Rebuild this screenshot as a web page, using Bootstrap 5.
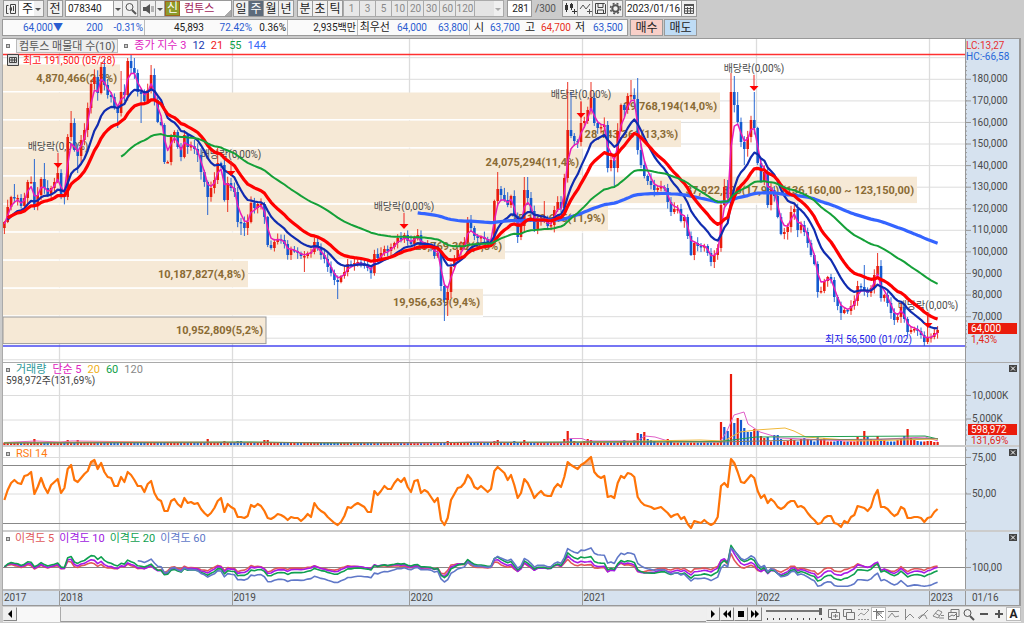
<!DOCTYPE html>
<html lang="ko">
<head>
<meta charset="utf-8">
<meta name="viewport" content="width=device-width, initial-scale=1">
<title>컴투스 주간 차트</title>
<link href="https://cdn.jsdelivr.net/npm/bootstrap@5.3.0/dist/css/bootstrap.min.css" rel="stylesheet">
<style>
:root{--edge:#9a9a9a;--face:#f0f0f0;--axis:#d6e2ef;--ui:Roboto,"Noto Sans CJK KR",sans-serif}
body{background:#cbcbcb;font-family:var(--ui);font-size:11px;line-height:14px;color:#222;min-height:100vh;overflow:hidden}
button,input,select{font-family:inherit;font-size:inherit;line-height:inherit;color:inherit}
.tools{height:18px;padding-left:3px}
.tool,.field,.pick{height:17px;width:16px;padding:0;border:1px solid var(--edge);border-radius:0;background:var(--face);line-height:14px;font-size:12px;margin-right:-1px;flex:none;color:#222;text-align:center}
.tool svg{display:block;margin:auto}
.tool:hover{background:#fff}
.tool.on{background:#5d6b7b;color:#fff}
.tool:disabled{background:#e8e8e8;border-color:#aaa;color:#888;opacity:1;font-size:10px}
.field,.pick{background:#fff;font-size:10px}
.field{text-align:left;padding:0 2px}
.pick{appearance:none;padding-left:3px;text-align:left;font-size:12px;background:#fff linear-gradient(var(--face),var(--face)) right/9px 100% no-repeat}
.arrow{width:10px}
.pick-mark{position:relative;flex:none;height:17px}
.pick-mark svg{position:absolute;right:1px;top:3px;pointer-events:none}
.code-no{width:49px}.count{width:25px;text-align:right}.total{width:31px;color:#555;font-size:10px;line-height:17px}.date{width:57px;padding:0 1px}
.span{width:16px}.period{width:17px}.period.wide{width:20px}.mid{width:26px}.blank-pick{width:30px;background-color:#e4e4e4;border-color:#aaa}
.gap0{margin-left:1px}.gap1{margin-left:3px}.gap2{margin-left:4px}
.mark-new{width:15px;height:15px;border:1px solid #a0651c;background:#8d9b2b;color:#fff;line-height:12px;text-align:center;flex:none;font-size:12px}
.company{width:68px;height:17px;border:1px solid var(--edge);background:linear-gradient(135deg,transparent 80%,#aaa 80%) right/16px 100% no-repeat #fff;color:#a02458;line-height:15px}
.quotes{height:17px;margin:1px 0 1px 2px}
.quote-row{display:grid;grid-template-columns:61px 40px 41px 60px 48px 35px 70px 33px 37px 42px 15px 36px 15px 36px 14px 41px;border:1px solid var(--edge);background:#fafafa;height:17px;width:626px;font-size:10px;line-height:15px}
.quote-row span{text-align:right;white-space:nowrap;padding-right:1px}
.quote-row .word{font-size:11px}
.quote-row .cut{border-right:1px solid #bbb}
.up{color:#e8301c}.down{color:#2a5cd0}
.trade{width:33px;margin-left:2px;background:#f8cfc8}.trade.sell{background:#bfdcf5}
.stage{border:1px solid #999;border-left:1px solid #aaa;border-right:2px solid #999;margin:1px 3px 0 2px;background:#fff}
.pane{position:relative;min-height:0;border-bottom:2px solid #ccc}
.pane svg.plot{position:absolute;inset:0;width:100%;height:100%;display:block}
.price{flex:323 1 0;border-bottom:1px solid #aaa}.volume{flex:82 1 0}.rsi{flex:83 1 0}.gap-rate{flex:57 1 0;border-bottom-color:#bbb}.dates{flex:14 1 0;border:0}
.legend{position:absolute;top:0;left:3px;display:flex;gap:6px;white-space:nowrap;z-index:1}
.gap-rate .legend{gap:5px}
.legend i{width:4px;height:4px;border:1px solid #777;background:#ccc;margin:5px 0 0 0}
.series-btn{border:1px solid #bbb;background:#eee;padding:0 2px;line-height:11px;height:14px;color:#555;font-size:11px}
.sub{position:absolute;top:12px;left:3px;color:#444;z-index:1;font-size:10px;line-height:12px}
.high-note{position:absolute;top:15px;left:4px;z-index:1;color:#ff1010;font-size:10px}
.shut{position:absolute;right:2px;top:2px;width:8px;height:7px;padding:0;border:0;background:#444;color:#fff;z-index:1}
.shut svg{display:block}
.plot text{font-size:10px;font-family:var(--ui)}
.plot .amount{font-size:11px;font-weight:700;fill:#8a6b34;text-anchor:end}
.plot .note,.plot .tick{fill:#4a4a4a}
.bottom{height:15px;margin:1px 3px 1px 3px;background:#f0f0f0}
.bottom .tool{width:14px;height:14px;border-color:#888;border-left-color:#eee;border-top-color:#eee;margin-right:0}
.track{width:44px;background:#f8f8f8;border-right:1px solid #aaa}
.thumb{background:#efefef;border-bottom:1px solid #999}
.zoomer{width:64px;padding:0 4px;background:repeating-linear-gradient(90deg,#444 0 1px,transparent 1px 6px) 5px 11px/55px 2px no-repeat}
.zoomer input{appearance:none;display:block;width:56px;height:9px;background:linear-gradient(#777,#777) 0 3px/100% 2px no-repeat;margin:0}
.zoomer input::-webkit-slider-thumb{appearance:none;width:3px;height:7px;background:#666}
.bottom .draw{border:0;background:none;width:15px}
.bottom .draw.pressed{background:#fff;border:1px solid #bbb;line-height:12px}
</style>
</head>
<body class="d-flex flex-column">
<header>
<div class="tools d-flex align-items-start">
<button class="tool" aria-label="창"><svg width="12" height="12" fill="none" stroke="#444"><path d="M5.5 1.500h5v9h-5zM3.500 2.500h-2v8h2M8.500 3v5"/><path d="M7 4v4L4 6z" fill="#444" stroke="none"/></svg></button>
<div class="pick-mark"><select class="pick mid" aria-label="종류"><option>주</option></select><svg width="8" height="12"><path d="M1 5h6L4 8z" fill="#555"/></svg></div>
<button class="tool gap2">전</button>
<input class="field code-no gap1" value="078340" aria-label="종목코드">
<button class="tool arrow" aria-label="종목 목록"><svg width="8" height="12"><path d="M1 5h6L4 8z" fill="#555"/></svg></button>
<button class="tool" aria-label="검색"><svg width="13" height="13" fill="none" stroke="#555"><circle cx="5.500" cy="5" r="3.500"/><path d="M8 8l4 4" stroke-width="2"/></svg></button>
<button class="tool gap1" aria-label="소리"><svg width="12" height="12" fill="#555"><path d="M1 4h3l4-3v10L4 8H1z"/><path d="M9 4h3M9 6h3M9 8h3" stroke="#777"/></svg></button>
<button class="tool arrow" aria-label="소리 설정"><svg width="8" height="12"><path d="M1 5h6L4 8z" fill="#555"/></svg></button>
<div class="company d-flex gap-1"><span class="mark-new">신</span><span>컴투스</span></div>
<button class="tool span gap0">일</button><button class="tool span on">주</button><button class="tool span">월</button><button class="tool span">년</button>
<button class="tool span gap2">분</button><button class="tool span">초</button><button class="tool span">틱</button>
<button class="tool period gap0" disabled>1</button><button class="tool period" disabled>3</button><button class="tool period" disabled>5</button><button class="tool period" disabled>10</button><button class="tool period" disabled>20</button><button class="tool period" disabled>30</button><button class="tool period" disabled>60</button><button class="tool period wide" disabled>120</button>
<div class="pick-mark"><select class="pick blank-pick" aria-label="간격" disabled><option></option></select><svg width="8" height="12"><path d="M1 5h6L4 8z" fill="#aaa"/></svg></div>
<input class="field count gap2" value="281" aria-label="표시 개수"><span class="total ps-1">/300</span>
<button class="tool" aria-label="봉 추가"><svg width="13" height="13" fill="#333"><path d="M1 3h3v5H1zM6 2h3v4H6zM2 1h1v9H2zM7 1h1v7H7zM8 9h5v1H8zM10 7h1v5h-1z"/></svg></button>
<button class="tool" aria-label="지표 추가"><svg width="13" height="13" fill="none" stroke="#555"><path d="M1 7l3-4 3 4 4-5M8 9.500h5M10.500 7v5"/></svg></button>
<button class="tool" aria-label="저장"><svg width="13" height="13" fill="none" stroke="#444"><path d="M1.500 1.500h9l1 1v9h-10zM4 1.500v4h5v-4M3.500 11V8h6v3"/></svg></button>
<button class="tool" aria-label="설정"><svg width="13" height="13" fill="none" stroke="#555"><circle cx="6.500" cy="6.500" r="3.200" stroke-width="2"/><circle cx="6.500" cy="6.500" r="5" stroke-width="1.500" stroke-dasharray="2 2"/></svg></button>
<input class="field date gap1" value="2023/01/16" aria-label="날짜">
<button class="tool" aria-label="달력"><svg width="12" height="12" fill="none" stroke="#555"><path d="M1 2h10" stroke-width="2"/><path d="M1.500 2v8.500h9V2M1 5.500h10M1 8h10M4.500 4v6M7.500 4v6"/></svg></button>
</div>
<div class="quotes d-flex">
<div class="quote-row"><span class="down">64,000▼</span><span class="down">200</span><span class="down cut">-0.31%</span><span>45,893</span><span class="down">72.42%</span><span class="cut">0.36%</span><span class="cut">2,935백만</span><span class="word">최우선</span><span class="down">64,000</span><span class="down cut">63,800</span><span class="word">시</span><span class="down">63,700</span><span class="word">고</span><span class="up">64,700</span><span class="word">저</span><span class="down pe-1">63,500</span></div>
<button class="tool trade">매수</button><button class="tool trade sell">매도</button>
</div>
</header>
<main class="stage flex-grow-1 d-flex flex-column">
<section class="pane price" data-pane="price">
<div class="legend"><i></i><button class="series-btn">컴투스 매물대 수(10)</button><i></i><span style="color:#e024c0">종가 지수 3</span><span style="color:#1838b0">12</span><span style="color:#f01818">21</span><span style="color:#10a048">55</span><span style="color:#3868f8">144</span></div>
<div class="high-note d-flex gap-1"><svg width="12" height="12" fill="none" stroke="#444"><path d="M.5.5h11v11H.5z" fill="#ddd"/><path d="M2.500 3.500h7v5h-7zM2 6h8M5 3v6M7.500 3v6"/></svg><span>최고 191,500 (05/28)</span></div>
<svg class="plot"></svg></section>
<section class="pane volume" data-pane="volume">
<div class="legend"><i></i><span style="color:#2c9898">거래량</span><span style="color:#e024c0">단순 5</span><span style="color:#f0b020">20</span><span style="color:#10a048">60</span><span style="color:#888">120</span></div><div class="sub">598,972주(131,69%)</div>
<button class="shut" aria-label="거래량 닫기"><svg width="8" height="7" stroke="#fff"><path d="M2 1.500l4 4M6 1.500l-4 4"/></svg></button><svg class="plot"></svg></section>
<section class="pane rsi" data-pane="rsi">
<div class="legend"><i></i><span style="color:#ff7a10">RSI 14</span></div>
<button class="shut" aria-label="RSI 닫기"><svg width="8" height="7" stroke="#fff"><path d="M2 1.500l4 4M6 1.500l-4 4"/></svg></button><svg class="plot"></svg></section>
<section class="pane gap-rate" data-pane="gap">
<div class="legend"><i></i><span style="color:#e05858">이격도 5</span><span style="color:#a020e0">이격도 10</span><span style="color:#10a050">이격도 20</span><span style="color:#6078c8">이격도 60</span></div>
<button class="shut" aria-label="이격도 닫기"><svg width="8" height="7" stroke="#fff"><path d="M2 1.500l4 4M6 1.500l-4 4"/></svg></button><svg class="plot"></svg></section>
<div class="pane dates" data-pane="dates"><svg class="plot"></svg></div>
</main>
<footer class="bottom d-flex">
<button class="tool" aria-label="왼쪽"><svg width="10" height="10"><path d="M7 1v8L3 5z"/></svg></button><div class="track"></div><div class="thumb flex-grow-1"></div>
<button class="tool" aria-label="재생"><svg width="10" height="10"><path d="M3 1v8l4-4z"/></svg></button>
<button class="tool" aria-label="뒤로"><svg width="10" height="10"><path d="M5 1v8L1 5zM9 1v8L5 5z"/></svg></button>
<button class="tool" aria-label="정지"><svg width="10" height="10"><path d="M2 2h6v6H2z"/></svg></button>
<button class="tool" aria-label="앞으로"><svg width="10" height="10"><path d="M1 1v8l4-4zM5 1v8l4-4z"/></svg></button>
<div class="zoomer"><input type="range" value="100" aria-label="확대 비율"></div>
<button class="tool draw" aria-label="창 추가"><svg width="13" height="13" fill="none" stroke="#777"><path d="M4 9.500H1.500v-8h8V4M4.500 4.500h8v7h-8zM8.500 6v4M6 8h5"/></svg></button>
<button class="tool draw" aria-label="창 겹침"><svg width="13" height="13" fill="none" stroke="#777"><path d="M4 8.500H1.500v-7h8V4M4.500 4.500h8v7h-8z"/></svg></button>
<button class="tool draw" aria-label="추세"><svg width="13" height="13" fill="none" stroke="#999"><path d="M1 8l3-3 3 2 5-5"/><path d="M1 1.500h11M1 11.500h11" stroke-dasharray="2 1"/></svg></button>
<button class="tool draw pressed" aria-label="십자선"><svg width="13" height="12" fill="none" stroke="#777"><path d="M1 3.500h11M4.500 1v10M5 4l6 6M6 8V5h4"/></svg></button>
<button class="tool draw" aria-label="수평선"><svg width="13" height="13" fill="none" stroke="#888"><path d="M1 3.500h11M1 10l4-5 3 4 4-1"/></svg></button>
<button class="tool draw" aria-label="수직선"><svg width="13" height="13" fill="none" stroke="#888"><path d="M3.500 1v11M4 10l4-4 4 4"/></svg></button>
<button class="tool draw" aria-label="빗금"><svg width="13" height="13" fill="none" stroke="#888"><path d="M2 11l9-9M1 10l4-3 3 0 2 4"/></svg></button>
<button class="tool draw" aria-label="지우개"><svg width="13" height="13" fill="none" stroke="#888"><path d="M1 8l5-6 4 2-4 6zM7 10h5M9 7.500h3M3 5l5 3"/></svg></button>
<button class="tool draw" aria-label="복사"><svg width="13" height="13" fill="none" stroke="#777"><path d="M4 4V1.500h8v7h-2M1.500 4.500h8v7h-8zM2 9l3-2 2 1 2-2"/></svg></button>
<button class="tool draw" aria-label="돋보기"><svg width="13" height="13" fill="none" stroke="#555"><circle cx="5.500" cy="5" r="3.500"/><path d="M8 8l4 4" stroke-width="2"/></svg></button>
<button class="tool draw" aria-label="축소"><svg width="12" height="12"><path d="M2 5h8v2H2z" fill="#555"/></svg></button>
<button class="tool draw" aria-label="확대"><svg width="12" height="12"><path d="M2 5h8v2H2zM5 2h2v8H5z" fill="#555"/></svg></button>
<button class="tool draw pressed fw-bold">A</button>
</footer>
<script src="https://cdn.jsdelivr.net/npm/bootstrap@5.3.0/dist/js/bootstrap.bundle.min.js"></script>
<script>
// Weekly closes as heights on the price scale (79.3 = 180,000 won, 21.58 per 10,000 won)
const close=[
222,207,197,198,198,206,198,182,182,205,195,179,188,195,188,182,173,195,197,137,
123,150,156,140,130,108,84,77,93,67,85,95,97,108,113,92,95,61,68,73,
92,94,101,90,75,100,122,125,162,162,137,132,147,157,135,147,146,149,155,172,
182,197,188,180,163,165,200,183,188,192,222,223,228,222,203,208,204,204,217,245,
248,242,239,240,244,255,250,251,253,256,256,253,252,242,248,255,259,267,273,280,
282,276,272,264,265,263,262,263,266,268,273,254,258,253,249,251,247,243,238,239,
235,241,244,237,235,245,245,245,247,256,253,286,300,292,267,260,250,246,242,220,
228,236,238,237,239,242,240,201,189,195,200,205,196,216,237,226,190,198,211,229,
220,220,220,226,225,210,202,208,178,130,136,141,142,123,121,110,98,123,128,127,
125,168,160,168,131,105,110,96,95,99,150,165,176,181,185,190,188,187,188,202,
212,209,209,221,217,236,255,243,246,247,246,253,262,255,248,205,187,198,92,105,
122,142,149,137,120,128,163,182,172,205,190,196,217,234,232,227,212,209,230,225,
232,243,255,264,292,291,281,277,280,297,306,313,310,311,306,301,286,287,290,293,
288,275,266,298,295,303,313,320,317,307,319,332,330,329,331,335,342,338,337,333,330];
const highs={3:184,9:159,12:163,20:111,35:71,37:58,38:55,39:58,44:65,64:148,124:229,139:217,140:215,148:172,149:186,156:177,157:177,162:201,169:82,170:92,173:102,176:82,188:80,190:78,218:73,219:76,220:92,225:92,258:265,262:253,277:312};
const lows={0:234,9:210,22:173,34:128,41:123,48:164,61:215,67:212,71:235,90:272,100:299,132:321,133:316,154:243,159:232,183:188,206:256,213:268,222:165,251:320,267:325,276:346};
const rsi=[
500,490,483,480,483,484,476,475,472,494,487,478,487,493,485,482,479,493,488,469,
465,480,482,478,474,471,462,460,469,463,472,477,478,486,486,477,482,472,475,480,
486,486,492,484,481,493,499,501,511,511,501,499,504,507,498,503,502,504,503,509,
513,516,513,508,501,498,512,504,507,509,517,517,518,516,505,507,504,506,511,518,
519,517,514,515,517,520,517,518,518,521,518,514,517,503,508,511,513,517,520,523,
525,522,516,507,508,505,503,505,507,512,512,491,495,491,486,489,489,483,479,482,
478,487,492,481,480,493,490,492,497,502,498,520,525,518,500,494,488,487,483,475,
479,487,489,486,489,492,489,471,467,470,473,480,475,485,498,493,479,483,490,498,
494,491,495,496,496,488,484,487,477,462,465,467,469,465,463,460,457,472,476,478,
476,497,496,498,483,476,478,473,474,477,497,502,505,506,507,509,508,507,510,513,
517,515,514,519,517,524,528,521,522,523,520,523,525,523,517,486,483,487,459,463,
472,482,483,479,475,478,491,498,495,503,499,502,507,509,507,503,501,501,507,506,
508,513,517,520,524,523,518,516,516,523,524,527,521,523,517,515,506,507,508,511,
507,496,490,507,507,509,513,516,514,507,509,518,518,517,517,518,522,518,517,512,509];
const vols={4:3,9:6,19:5,22:5,41:3,46:3,48:3,61:6,66:4,70:4,71:4,78:5,79:5,111:3,131:3,133:4,147:4,148:5,153:4,156:5,166:3,167:3,168:6,169:14,170:6,171:4,174:4,175:6,176:5,185:4,186:5,189:5,190:12,191:11,192:13,193:6,194:5,195:4,199:6,200:5,
215:23,216:18,217:14,218:71,219:22,220:27,221:25,222:17,223:13,224:13,225:16,226:14,227:9,228:7,229:8,231:10,232:10,233:6,235:4,236:6,237:5,239:6,240:7,241:6,242:5,244:8,245:6,246:7,250:4,251:4,256:8,257:6,258:14,259:8,260:6,261:5,262:9,263:6,264:5,268:5,269:6,270:9,271:16,272:7,273:5,274:4,277:4,278:4,279:3,280:3};
const surges=[9,22,61,78,79,190,192,220,225,258,271];
const falls=[216,217,219,221,222,223,224,226];
const bands=[[120,'4,870,466(2,3%)'],[720,'29,768,194(14,0%)'],[681,'28,143,361(13,3%)'],[582,'24,075,294(11,4%)'],[917,'37,922,326(17,9%) (136,160,00 ~ 123,150,00)'],[608,'25,129,615(11,9%)'],[505,'20,769,392(9,8%)'],[248,'10,187,827(4,8%)'],[483,'19,956,639(9,4%)'],[266,'10,952,809(5,2%)']];
const rights=[[58,150],[231,158],[404,210],[581,98],[754,72],[928,309]];
const years=[[3,2017],[59.5,2018],[232.5,2019],[409.5,2020],[582.5,2021],[756.5,2022],[929.5,2023]];
const range={price:[39,323],volume:[363,82],rsi:[447,83],gap:[532,57],dates:[591,14]};
const ix=i=>4.4+i*3.333;
const won=y=>180000-(y-79.3)/21.58*10000;
function ema(a,n,start,seed){const o=[];let v=seed;for(let i=start;i<a.length;i++){v+=(a[i]-v)*2/(n+1);o.push([ix(i),v]);}return o;}
function draw(){
 document.querySelectorAll('[data-pane]').forEach(p=>{
  const k=p.dataset.pane,[top,h]=range[k],s=p.querySelector('svg.plot'),W=s.clientWidth,H=s.clientHeight,pw=W-54;
  const X=x=>((x-3)*pw/962).toFixed(1),Y=y=>((y-top)*H/h).toFixed(1);let o='';
  const line=(x1,y1,x2,y2,c,w=1)=>o+=`<line x1="${X(x1)}" y1="${Y(y1)}" x2="${X(x2)}" y2="${Y(y2)}" stroke="${c}" stroke-width="${w}"/>`;
  const poly=(a,c,w)=>o+=`<polyline points="${a.map(q=>X(q[0])+','+Y(q[1])).join(' ')}" fill="none" stroke="${c}" stroke-width="${w}" stroke-linejoin="round"/>`;
  const rect=(x,y,x2,y2,c,e='')=>o+=`<rect x="${X(x)}" y="${Y(y)}" width="${(X(x2)-X(x)).toFixed(1)}" height="${(Y(y2)-Y(y)).toFixed(1)}" fill="${c}" ${e}/>`;
  const tick=(y,t)=>{o+=`<path d="M${pw} ${Y(y)}h6" stroke="#999"/><text class="tick" x="${pw+7}" y="${+Y(y)+3}">${t}</text>`;};
  const flag=(y,t,u)=>{o+=`<rect x="${pw+3}" y="${+Y(y)-6}" width="49" height="11" fill="#ea1c0c"/><text x="${pw+6}" y="${+Y(y)+3}" fill="#fff">${t}</text><text x="${pw+6}" y="${+Y(y)+14}" fill="#e02818">${u}</text>`;};
  o+=`<rect x="${pw}" width="54" height="${H}" fill="#d6e2ef"/>`;
  if(k==='dates'){o=`<rect width="${W}" height="${H}" fill="#d6e2ef"/>`;
   years.forEach(([x,t],i)=>{if(i)line(x,591,x,606,'#999');o+=`<text class="tick" x="${+X(x)+1}" y="${H-4}">${t}</text>`;});
   o+=`<path d="M${pw+.5} 0v${H}" stroke="#999"/><text class="tick" x="${pw+7}" y="${H-4}">01/16</text>`;s.innerHTML=o;return;}
  years.slice(1).forEach(q=>line(q[0],top,q[0],top+h,'#dcdcdc',1.3));
  const grid={price:Array.from({length:15},(_,i)=>57.7+i*21.58),volume:[395.5,420],rsi:[457.5,494],gap:[]}[k];
  grid.forEach(y=>line(3,y,965,y,'#dcdcdc'));
  if(k==='price'){
   bands.forEach(([r,t],i)=>{const y=64.5+i*28.05;rect(3,y,r,y+26.6,'#f6e9d6',i===9?'stroke="#999"':'');if(i<9)line(3,y+27.3,r,y+27.3,'#fff',1.4);o+=`<text class="amount" x="${X(r-3)}" y="${+Y(y)+17}">${t}</text>`;});
   rights.forEach(([x,y])=>{o+=`<text class="note" text-anchor="middle" x="${X(x)}" y="${Y(y)}">배당락(0,00%)</text>`;});
   o+=`<text x="${X(825)}" y="${Y(343)}" fill="#2020e8">최저 56,500 (01/02)</text>`;
   line(3,54.5,965,54.5,'#ff3030',1.3);line(3,346,965,346,'#4848f0',1.3);
   close.forEach((c,i)=>{const b=i?close[i-1]:228,up=c<=b,a=Math.abs(Math.sin(i*12.9898)*43758.5)%1,d=Math.abs(Math.sin(i*78.233)*9631.7)%1;
    const big=won(c)>110000?7:5,hi=highs[i]??Math.min(b,c)-a*big-1,lo=lows[i]??Math.max(b,c)+d*big+1,col=up?'#ea1c0c':'#145ad0';
    line(ix(i),hi,ix(i),lo,col,.9);rect(ix(i)-1.3,Math.min(b,c),ix(i)+1.3,Math.max(b,c,Math.min(b,c)+1.5),col);});
   poly(ema(close,3,0,226),'#e81cb8',1.5);poly(ema(close,12,1,222),'#102cb0',2.2);
   poly(ema(close,144,124,212.5),'#3464ff',3.2);poly(ema(close,21,1,219),'#ff0000',3.2);poly(ema(close,55,35,159),'#14a038',2);
   rights.forEach(([x,y],i)=>{const e=[168,176,229,118,91,328][i];line(x,y+3,x,e-4,'#f02020');o+=`<path d="M${X(x-4.5)} ${Y(e-5)}L${X(x+4.5)} ${Y(e-5)}L${X(x)} ${Y(e)}z" fill="#f00"/>`;});
   for(let y=62;y<350;y+=4.316)o+=`<path d="M${pw} ${Y(y)}h2" stroke="#999"/>`;
   for(let i=0;i<12;i++)tick(79.3+i*21.58,`${180-i*10},000`);
   o+=`<text x="${pw+1}" y="${Y(49)}" fill="#e83030">LC:13,27</text><text x="${pw+1}" y="${Y(60)}" fill="#2868d8">HC:-66,58</text>`;
   flag(329,'64,000','1,43%');
  }
  if(k==='volume'){
   close.forEach((c,i)=>{const v=vols[i]||(i>214?3.5:2.4),up=surges.includes(i)||!falls.includes(i)&&(i%7===3||c<=(i?close[i-1]:228));rect(ix(i)-1.1,445-v,ix(i)+1.1,445,up?'#ea1c0c':'#145ad0');});
   poly([[4,442.5],[36,441],[60,442],[72,441],[150,442],[280,442.500],[430,443],[480,442],[565,443],[570,438.500],[582,438.500],[588,441],[637,441],[645,436],[655,437],[668,441],[720,442],[727,431],[734,415],[744,412],[748,424],[760,432],[780,438],[850,441],[925,437],[938,441]],'#e060c8',1);
   poly([[4,442.500],[120,442],[320,442.500],[560,442.500],[700,440],[724,441],[740,432],[756,430],[785,428],[794,431],[806,437],[860,441],[938,439]],'#f0b838',1);
   poly([[4,443],[250,442],[330,443],[580,442],[720,441.500],[756,437],[925,436],[938,439]],'#20a050',1);
   poly([[4,443],[400,442.500],[720,442],[800,440],[938,438.500]],'#8a8060',1);
   tick(395.5,'10,000K');tick(419,'5,000K');for(let y=380;y<445;y+=5)o+=`<path d="M${pw} ${Y(y)}h2" stroke="#999"/>`;flag(430,'598,972','131,69%');
  }
  if(k==='rsi'){
   line(3,465.5,965,465.5,'#888');line(3,523.5,965,523.5,'#888');
   [[19,22],[26,30],[169,177],[218,220]].forEach(([a,b])=>{let d='';for(let i=a;i<b;i++)d+=`${X(ix(i))},${Y(Math.min(rsi[i],465))} `;o+=`<polygon points="${d}${X(ix(b-1))},${Y(465)} ${X(ix(a))},${Y(465)}" fill="#f4b890"/>`;});
   poly(rsi.map((y,i)=>[ix(i),y]),'#ff7408',2.2);tick(457.5,'75,00');tick(494,'50,00');
   for(let y=450;y<530;y+=14.4)o+=`<path d="M${pw} ${Y(y)}h2" stroke="#999"/>`;
  }
  if(k==='gap'){
   line(3,567.5,965,567.5,'#888');const p=close.map(won);
   [[5,0,'#e05858',p[0]*.99,50],[10,0,'#a818e8',p[0]*.99,50],[20,0,'#10a050',p[0]*.99,50],[60,40,'#6078c8',153000,52]].forEach(([n,st,c,seed,m])=>{
    poly(ema(p,n,st,seed).map(([x,v],j)=>{const r=p[j+st]/v-1;return [x,567.3-Math.max(-19,Math.min(24,r*(n===60&&r<0?56:n===60?50:m)))];}),c,1.6);});
   tick(567.5,'100,00');[540,549,558].forEach(y=>o+=`<path d="M${pw} ${Y(y)}h2" stroke="#999"/>`);
  }
  o+=`<path d="M${pw+.5} 0v${H}" stroke="#999"/>`;
  s.innerHTML=o;
 });
}
draw();addEventListener('resize',draw);
</script>
</body>
</html>
